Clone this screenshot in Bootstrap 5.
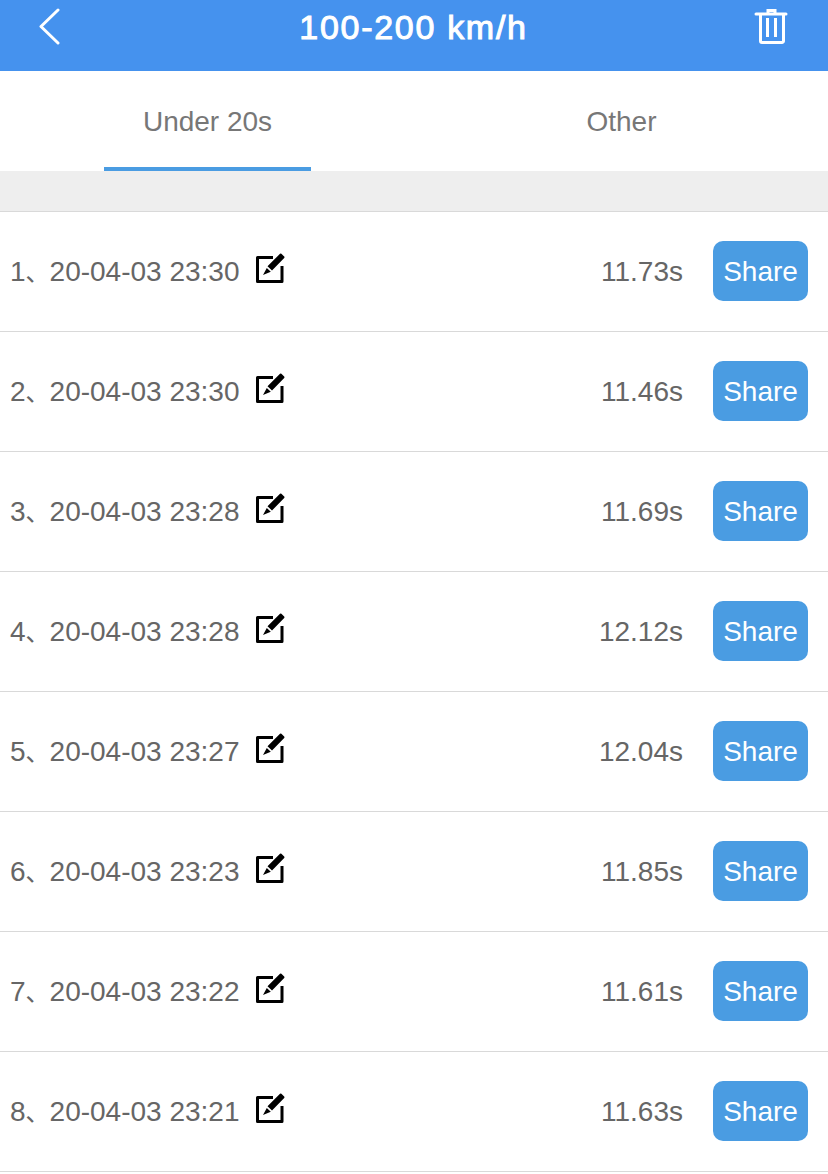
<!DOCTYPE html>
<html lang="en">
<head>
  <meta charset="UTF-8">
  <title>100-200 km/h</title>
  <link href="https://cdn.jsdelivr.net/npm/bootstrap@5.3.3/dist/css/bootstrap.min.css" rel="stylesheet">
  <style>
    body { font-family: "Liberation Sans", "Noto Sans CJK SC", sans-serif; background: #fff; }
    .top-bar { height: 71px; background: #4592ee; color: #fff; padding: 0 40px 0 38px; }
    .top-title { font-size: 34px; font-weight: 400; letter-spacing: 1.7px; line-height: 55px; margin-left: 11px; -webkit-text-stroke: 1px #fff; }
    .tab-strip { height: 100px; }
    .tab-item { width: 207px; height: 100px; color: #777; font-size: 28px; line-height: 101px; margin-left: 104px; }
    .tab-item.picked { box-shadow: inset 0 -4px 0 #4a9ce2; }
    .tab-other { margin-left: 207px; }
    .gap-band { height: 41px; background: #eee; border-bottom: 1px solid #d9d9d9; }
    .run-row { height: 120px; border-bottom: 1px solid #d9d9d9; padding: 0 20px 0 10px; color: #666; font-size: 28px; }
    .run-sep { font-size: 24px; }
    .edit-ico { margin-left: 15px; margin-top: -8px; }
    .run-time { margin-right: 30px; }
    .share-btn { width: 95px; height: 60px; margin-top: -1px; padding: 2px 0 0; border: 0; border-radius: 10px; background: #4a9ce2; color: #fff; font-size: 28px; }
  </style>
</head>
<body>
  <div class="top-bar d-flex align-items-start justify-content-between">
    <svg class="mt-2" width="24" height="38" viewBox="0 0 24 38" fill="none" stroke="#fff" stroke-width="3" stroke-linecap="round" stroke-linejoin="round"><path d="M20 2 3 18.500 20 35"/></svg>
    <div class="top-title">100-200 km/h</div>
    <svg class="mt-2" width="34" height="37" viewBox="0 0 34 37" fill="none" stroke="#fff" stroke-width="3"><path d="M2 6h30" stroke-linecap="round"/><path d="M14 5V2.500h7V5"/><path d="M6.500 6v27a1.500 1.500 0 0 0 1.500 1.500h20a1.500 1.500 0 0 0 1.500-1.500V6"/><path d="M13.500 10v19M21.500 10v19"/></svg>
  </div>

  <div class="tab-strip d-flex">
    <div class="tab-item picked text-center">Under 20s</div>
    <div class="tab-item tab-other text-center">Other</div>
  </div>
  <div class="gap-band"></div>

  <div id="runs"></div>

  <script src="https://cdn.jsdelivr.net/npm/bootstrap@5.3.3/dist/js/bootstrap.bundle.min.js"></script>
  <script>
    const runs = [
      ['20-04-03 23:30', '11.73s'],
      ['20-04-03 23:30', '11.46s'],
      ['20-04-03 23:28', '11.69s'],
      ['20-04-03 23:28', '12.12s'],
      ['20-04-03 23:27', '12.04s'],
      ['20-04-03 23:23', '11.85s'],
      ['20-04-03 23:22', '11.61s'],
      ['20-04-03 23:21', '11.63s']
    ];
    const editIcon = `<svg class="edit-ico" width="30" height="30" viewBox="0 0 30 30"><path d="M18 4.500H2.500V28.500H27V13" fill="none" stroke="#000" stroke-width="3" stroke-linejoin="round"/><path d="M25 .8a1 1 0 0 1 1.400 0l2.800 2.700a1 1 0 0 1 0 1.400L17 17.500l-4.500-4.200zM11.800 15l4 3.800-7.800 3.200z" fill="#000"/></svg>`;
    document.getElementById('runs').innerHTML = runs.map((r, i) => `
      <div class="run-row d-flex align-items-center">
        <span>${i + 1}<span class="run-sep">、</span>${r[0]}</span>
        ${editIcon}
        <span class="run-time ms-auto">${r[1]}</span>
        <button class="share-btn" type="button">Share</button>
      </div>`).join('');
  </script>
</body>
</html>
